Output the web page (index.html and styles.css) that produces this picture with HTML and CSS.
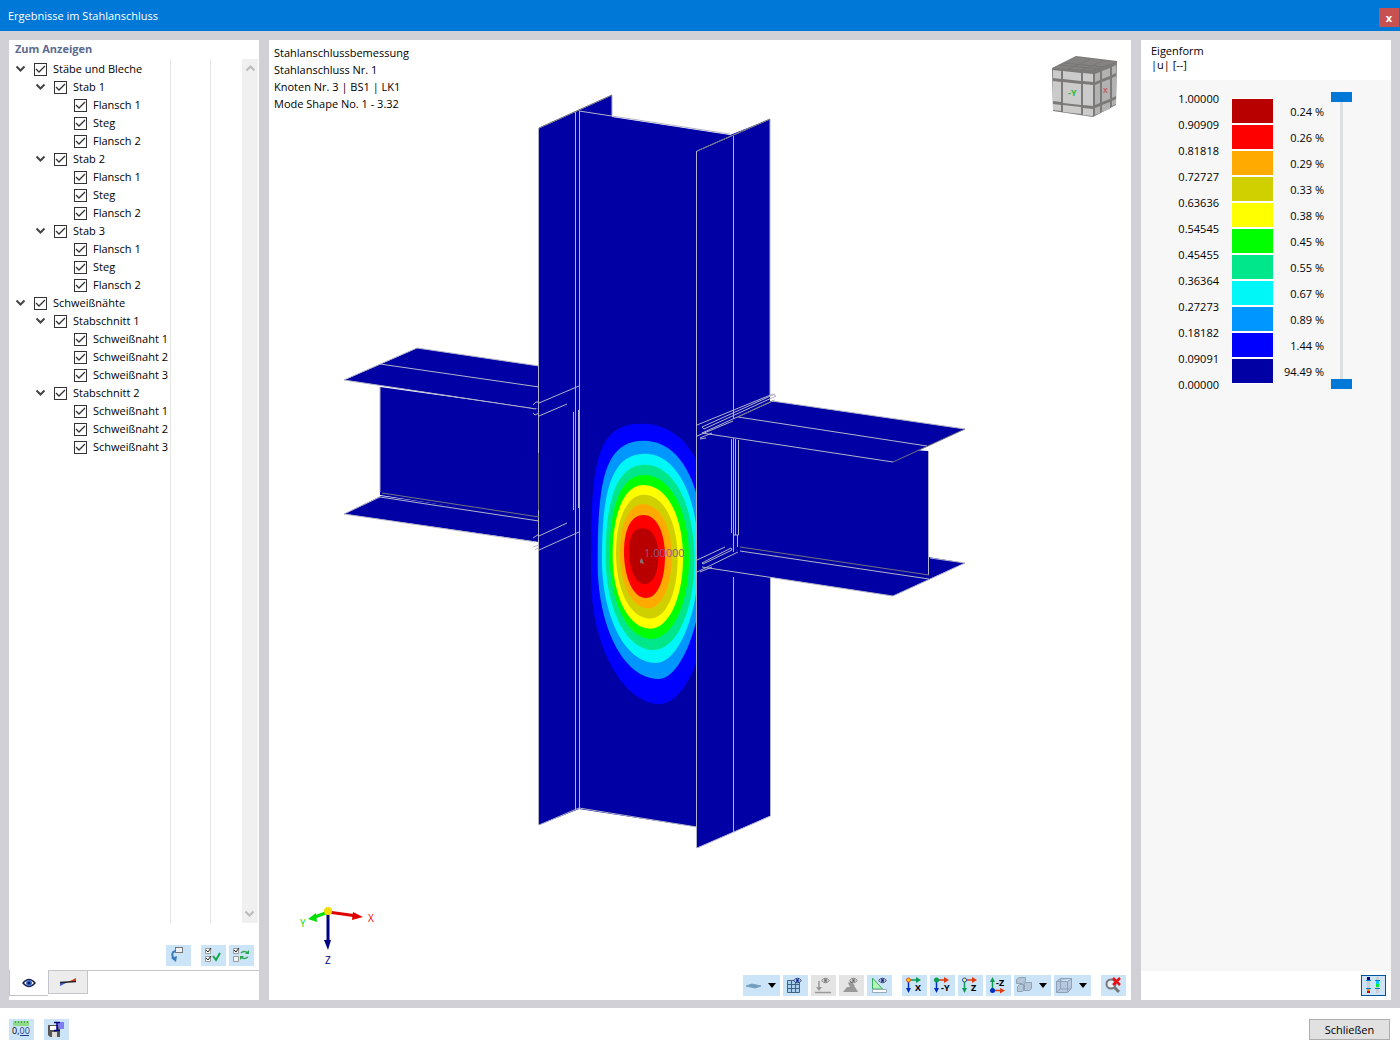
FILE: index.html
```html
<!DOCTYPE html>
<html lang="de">
<head>
<meta charset="utf-8">
<meta name="viewport" content="width=device-width, initial-scale=1">
<title>Ergebnisse im Stahlanschluss</title>
<link rel="stylesheet" href="styles.css">
</head>
<body>
<svg class="defs" aria-hidden="true">
  <symbol id="chev" viewBox="0 0 14 10"><path d="M2.500 2.500l4 4 4-4" fill="none" stroke="currentColor" stroke-width="2"/></symbol>
  <symbol id="eye" viewBox="0 0 14 10"><path d="M1 5Q7-2 13 5Q7 12 1 5z" fill="#fff" stroke="#1c2050" stroke-width="1.4"/><circle cx="7" cy="5" r="3" fill="#3d6fd0"/><circle cx="7" cy="5" r="1.5" fill="#101850"/></symbol>
  <symbol id="drop" viewBox="0 0 8 5"><path d="M0 0h8L4 5z" fill="#000"/></symbol>
</svg>

<header class="titlebar">
  <h1>Ergebnisse im Stahlanschluss</h1>
  <button class="close" aria-label="Fenster schließen">x</button>
</header>

<main class="workspace">
  <section class="panel side">
    <h2>Zum Anzeigen</h2>
    <div class="treebox">
      <ul class="tree">
        <li><div class="row"><button class="toggle" aria-label="Einklappen"><svg><use href="#chev"/></svg></button><label><input type="checkbox" checked>Stäbe und Bleche</label></div>
          <ul>
            <li><div class="row"><button class="toggle" aria-label="Einklappen"><svg><use href="#chev"/></svg></button><label><input type="checkbox" checked>Stab 1</label></div>
              <ul class="leaves">
                <li class="row"><label><input type="checkbox" checked>Flansch 1</label></li>
                <li class="row"><label><input type="checkbox" checked>Steg</label></li>
                <li class="row"><label><input type="checkbox" checked>Flansch 2</label></li>
              </ul>
            </li>
            <li><div class="row"><button class="toggle" aria-label="Einklappen"><svg><use href="#chev"/></svg></button><label><input type="checkbox" checked>Stab 2</label></div>
              <ul class="leaves">
                <li class="row"><label><input type="checkbox" checked>Flansch 1</label></li>
                <li class="row"><label><input type="checkbox" checked>Steg</label></li>
                <li class="row"><label><input type="checkbox" checked>Flansch 2</label></li>
              </ul>
            </li>
            <li><div class="row"><button class="toggle" aria-label="Einklappen"><svg><use href="#chev"/></svg></button><label><input type="checkbox" checked>Stab 3</label></div>
              <ul class="leaves">
                <li class="row"><label><input type="checkbox" checked>Flansch 1</label></li>
                <li class="row"><label><input type="checkbox" checked>Steg</label></li>
                <li class="row"><label><input type="checkbox" checked>Flansch 2</label></li>
              </ul>
            </li>
          </ul>
        </li>
        <li><div class="row"><button class="toggle" aria-label="Einklappen"><svg><use href="#chev"/></svg></button><label><input type="checkbox" checked>Schweißnähte</label></div>
          <ul>
            <li><div class="row"><button class="toggle" aria-label="Einklappen"><svg><use href="#chev"/></svg></button><label><input type="checkbox" checked>Stabschnitt 1</label></div>
              <ul class="leaves">
                <li class="row"><label><input type="checkbox" checked>Schweißnaht 1</label></li>
                <li class="row"><label><input type="checkbox" checked>Schweißnaht 2</label></li>
                <li class="row"><label><input type="checkbox" checked>Schweißnaht 3</label></li>
              </ul>
            </li>
            <li><div class="row"><button class="toggle" aria-label="Einklappen"><svg><use href="#chev"/></svg></button><label><input type="checkbox" checked>Stabschnitt 2</label></div>
              <ul class="leaves">
                <li class="row"><label><input type="checkbox" checked>Schweißnaht 1</label></li>
                <li class="row"><label><input type="checkbox" checked>Schweißnaht 2</label></li>
                <li class="row"><label><input type="checkbox" checked>Schweißnaht 3</label></li>
              </ul>
            </li>
          </ul>
        </li>
      </ul>
      <div class="column"></div>
      <div class="column wide"></div>
      <div class="scrollbar">
        <button aria-label="Nach oben"><svg class="up"><use href="#chev"/></svg></button>
        <button aria-label="Nach unten"><svg><use href="#chev"/></svg></button>
      </div>
    </div>
    <div class="actions">
      <button class="tool" aria-label="Auswahl übernehmen"><svg viewBox="0 0 25 21"><rect x="9.500" y="2.500" width="7" height="5" fill="#eef2f6" stroke="#777"/><path d="M9 6Q4 8 8 14" fill="none" stroke="#3a7cc0" stroke-width="2"/><path d="M5 13l6-2-1 6z" fill="#3a7cc0"/></svg></button>
      <span class="space"></span>
      <button class="tool" aria-label="Alle auswählen"><svg viewBox="0 0 25 21"><path d="M4.500 3.500h5v5h-5zM4.500 11.500h5v5h-5z" fill="#fff" stroke="#999"/><path d="M5 5l2 2 3-4M5 13l2 2 3-4" fill="none" stroke="#222"/><path d="M12 11l3 4 4-7" fill="none" stroke="#12a84b" stroke-width="2"/></svg></button>
      <button class="tool" aria-label="Auswahl umkehren"><svg viewBox="0 0 25 21"><path d="M4.500 3.500h5v5h-5zM4.500 11.500h5v5h-5z" fill="#eef4fa" stroke="#999"/><path d="M5 5l2 2 3-4" fill="none" stroke="#222"/><path d="M12 8q3-3 7 0M19 12q-4 3-7 0" fill="none" stroke="#2aa850" stroke-width="1.500"/><path d="M16 9h4V5zM15 11h-4v4z" fill="#2aa850"/></svg></button>
    </div>
    <nav class="tabs" aria-label="Ansichten">
      <button class="tab active" aria-label="Anzeige"><svg><use href="#eye"/></svg></button>
      <button class="tab" aria-label="Ergebnisse"><svg viewBox="0 0 18 10"><path d="M1 5h8L1 9z" fill="#3d5bd0"/><path d="M9 5l8-4v4z" fill="#e03a20"/><path d="M1 5.500L17 4.500" stroke="#222" stroke-width="1.500"/></svg></button>
      <span class="rest"></span>
    </nav>
  </section>

  <section class="panel view">
    <svg class="scene" viewBox="269 40 862 960" role="img" aria-label="Eigenform des Stahlanschlusses">
      <defs><clipPath id="web"><path d="M579 111H697V827H579z"/></clipPath></defs>
      <g class="steel">
        <path d="M344 380L417 348L539 366V409z"/>
        <path d="M380 387L539 409V520L380 495z"/>
        <path d="M344 514L381 496L539 518V542z"/>
        <path d="M539 128L612 95V117L730 135L770 119V816L697 848V827L579 809L539 825z"/>
      </g>
      <g clip-path="url(#web)"><g transform="translate(580 400) scale(.3333)">
        <path fill="#00f" d="M183 71C320 71 400 200 400 470C400 690 330 912 240 912C130 912 33 740 33 530C33 220 35 71 183 71"/>
        <path fill="#0096ff" d="M192 122C300 122 372 250 372 470C372 660 305 837 235 837C130 837 53 680 53 490C53 250 70 122 192 122"/>
        <path fill="#00f7f7" d="M196 161C285 161 356 280 356 480C356 640 295 789 228 789C130 789 66 640 66 480C66 280 90 161 196 161"/>
        <path fill="#00e68a" d="M194 194C280 194 343 310 343 480C343 630 290 750 220 750C135 750 77 620 77 470C77 300 110 194 194 194"/>
        <path fill="#0f0" d="M192 225C270 225 327 330 327 475C327 610 278 717 214 717C140 717 89 600 89 465C89 325 120 225 192 225"/>
        <path fill="#ff0" d="M190 255C260 255 309 345 309 475C309 595 265 686 212 686C145 686 98 590 98 465C98 345 130 255 190 255"/>
        <path fill="#d0d000" d="M192 284C250 284 293 365 293 475C293 580 258 656 210 656C150 656 108 570 108 460C108 360 140 284 192 284"/>
        <path fill="#fa0" d="M188 313C240 313 275 380 275 470C275 560 245 625 203 625C155 625 120 550 120 460C120 375 145 313 188 313"/>
        <path fill="red" d="M190 345C232 345 255 400 255 470C255 540 232 594 198 594C158 594 132 530 132 455C132 395 150 345 190 345"/>
        <path fill="#b90000" d="M188 385C218 385 235 420 235 468C235 515 220 552 194 552C166 552 147 505 147 452C147 410 162 385 188 385"/>
      </g></g>
      <g class="steel">
        <path d="M702 567L738 551L928 572V557L965 563L893 596z"/>
        <path d="M735 438L928 451L929 577L735 550z"/>
        <path d="M702 433L772 401L965 429L893 462z"/>
      </g>
      <g class="edges">
        <path d="M344 380L417 348L539 366M380 364L539 387M344 380L536 409M380 387V492M344 514L380 497L539 521M344 514L536 542"/>
        <path d="M538.500 128V825M539 128L612 95V116M575.500 112V809M579.500 111V809M579 111L730 134M696.500 151V848M697 151L770 119V396M733.500 136V419M770.500 578V816L697 848M733.500 577V832M539 825L579 808L697 827"/>
        <path d="M539 403L579 386M539 416L567 404M539 536L567 523M539 550L579 532M573.500 412V510M578.500 410V508"/>
        <path d="M533 405l3-3h3M533 413l2 2 4-2M533 538l6-4M533 547l6-2M535 550l4-3"/>
        <path d="M702 433L893 462M738 417L927 446M772 401L965 429M928.500 451V575M702 567L893 596L965 563L930 558M740 551L929 579M731.500 439V533M733.500 438V552M735.500 439V535M738.500 440V535H734M737.500 535V547"/>
        <path d="M697 425L773 394l3 2L704 429l-2-2L775 394M697 436l36-15M702 433L775 400M700 438l12-5M700 439l6-1M697 560L725 547M702 563L731 548l1 2L703 564zM697 572L738 552M700 572l12-5"/>
      </g>
      <path class="shade" d="M382 493L539 517M740 547L929 575M893 462L965 429M697 151L770 119M738 417L772 401M539 128L612 95M538.500 453V510"/>
      <path fill="#8a6a6a" d="M640 560l2-2 1 3 1 3-4-1z"/>
      <text class="peak" x="644" y="557">1.00000</text>
    </svg>

    <div class="view-top">
      <div class="info">
        <p>Stahlanschlussbemessung</p>
        <p>Stahlanschluss Nr. 1</p>
        <p>Knoten Nr. 3 | BS1 | LK1</p>
        <p>Mode Shape No. 1 - 3.32</p>
      </div>
      <svg class="cube" viewBox="0 0 70 66" role="img" aria-label="Ansichtswürfel">
        <path d="M2 14L26 2L67 7L66 51L43 63L3 57z" fill="#7c7a78"/>
        <path d="M4 14L26 3L64 8L43 16z" fill="#858381"/>
        <path d="M14 9L54 13M10 11L49 15M17 16L40 5M30 17L53 7" stroke="#787674" fill="none"/>
        <g fill="#cbcbcb"><path d="M3 16l8 1v8l-8-1zM13 17l18 2v8l-18-2zM33 19l10 1v8l-10-1zM3 27l8 1v20l-8-1zM13 28l18 2v21l-18-2zM33 30l10 1v21l-10-1zM3 50l8 1v6l-8-1zM13 51l18 2v7l-18-2zM33 54l10 1v7l-10-1z"/></g>
        <g fill="#b2b2b2"><path d="M45 20l5-2v8l-5 2zM52 17l8-3v8l-8 3zM62 13l4-2v8l-4 2zM45 31l5-2v20l-5 2zM52 28l8-3v20l-8 3zM62 24l4-2v20l-4 2zM45 54l5-2v7l-5 2zM52 51l8-3v7l-8 3zM62 47l4-2v5l-4 2z"/></g>
        <text class="cube-y" x="18" y="42">-Y</text><text class="cube-x" x="53" y="39">X</text>
      </svg>
    </div>

    <div class="view-bottom">
      <svg class="axes" viewBox="0 0 80 70" role="img" aria-label="Achsenkreuz">
        <path d="M29 14L58 18" stroke="#e00000" stroke-width="3"/><path d="M54 14l10 5-11 3z" fill="#e00000"/>
        <path d="M29 14L16 19" stroke="#00e000" stroke-width="3"/><path d="M17 15l-8 6 9 3z" fill="#00e000"/>
        <path d="M29 14V44" stroke="#000080" stroke-width="3"/><path d="M25 42h7l-3 10z" fill="#000080"/>
        <circle cx="29" cy="13" r="4" fill="#f0e000"/>
        <text x="69" y="24" fill="#e00">X</text><text x="1" y="29" fill="#0d0">Y</text><text x="26" y="66" fill="#000080">Z</text>
      </svg>
      <div class="toolbar">
        <button class="tool split" aria-label="Arbeitsebene"><svg viewBox="0 0 25 21"><path d="M3 11l6-2 9 2-6 2z" fill="#6f9cc0" stroke="#7ba0bd"/></svg><svg class="arrow"><use href="#drop"/></svg></button>
        <button class="tool" aria-label="Netz anzeigen"><svg viewBox="0 0 25 21"><path d="M4.500 5.500h12v12h-12zM8.500 5.500v12M12.500 5.500v12M4.500 9.500h12M4.500 13.500h12" fill="#a8d0ee" stroke="#3f6583"/><use href="#eye" x="10" y="2" width="9" height="7"/></svg></button>
        <button class="tool off" aria-label="Lasten anzeigen"><svg viewBox="0 0 25 21"><path d="M4 17.500h16M8 6v8" stroke="#999" stroke-width="1.500"/><path d="M5 12h6l-3 4z" fill="#999"/><use class="gray" href="#eye" x="10" y="2" width="9" height="7"/></svg></button>
        <button class="tool off" aria-label="Lager anzeigen"><svg viewBox="0 0 25 21"><path d="M4 17l4-5h8l3 5zM9 8l3-2 4 5-4 3z" fill="#999"/><use class="gray" href="#eye" x="10" y="2" width="9" height="7"/></svg></button>
        <button class="tool" aria-label="Maße anzeigen"><svg viewBox="0 0 25 21"><path d="M5.500 3v11h10z" fill="#b5f5b5" stroke="#38b060"/><path d="M5.500 14.500h14v3h-14z" fill="#fff" stroke="#9ab"/><use href="#eye" x="11" y="2" width="9" height="7"/></svg></button>
        <span class="space"></span>
        <button class="tool" aria-label="Ansicht in X"><svg viewBox="0 0 25 21"><path d="M7 5h9" stroke="#0a9a50" stroke-width="1.500"/><path d="M14 2l5 3-5 3z" fill="#0a9a50"/><path d="M6.500 5v9" stroke="#0030c0" stroke-width="1.500"/><path d="M4 13h5l-2.500 5z" fill="#0030c0"/><circle cx="6.500" cy="5" r="2" fill="#fd0" stroke="#e42"/><text x="13" y="16">X</text></svg></button>
        <button class="tool" aria-label="Ansicht in -Y"><svg viewBox="0 0 25 21"><path d="M7 5h9" stroke="#e03a10" stroke-width="1.500"/><path d="M14 2l5 3-5 3z" fill="#e03a10"/><path d="M6.500 5v9" stroke="#0030c0" stroke-width="1.500"/><path d="M4 13h5l-2.500 5z" fill="#0030c0"/><circle cx="6.500" cy="5" r="2.500" fill="#0a9a50"/><text x="11" y="16">-Y</text></svg></button>
        <button class="tool" aria-label="Ansicht in Z"><svg viewBox="0 0 25 21"><path d="M7 5h9" stroke="#e03a10" stroke-width="1.500"/><path d="M14 2l5 3-5 3z" fill="#e03a10"/><path d="M6.500 5v9" stroke="#0a9a50" stroke-width="1.500"/><path d="M4 13h5l-2.500 5z" fill="#0a9a50"/><circle cx="6.500" cy="5" r="2" fill="#ff8" stroke="#24a"/><text x="13" y="16">Z</text></svg></button>
        <button class="tool" aria-label="Ansicht in -Z"><svg viewBox="0 0 25 21"><path d="M7 15.500h9" stroke="#e03a10" stroke-width="1.500"/><path d="M14 13l5 2.500-5 3z" fill="#e03a10"/><path d="M6.500 15V6" stroke="#0a9a50" stroke-width="1.500"/><path d="M4 7h5L6.500 2z" fill="#0a9a50"/><circle cx="6.500" cy="15.500" r="2.500" fill="#0030c0"/><text x="10" y="11">-Z</text></svg></button>
        <button class="tool split" aria-label="Darstellung"><svg viewBox="0 0 25 21"><path d="M2.500 4.500l3-2h6v4l-3 2h-6zM3.500 11.500l2-2h5v5l-2 2h-5zM9.500 9.500l2-2h6v6l-2 2h-6z" fill="#b5c6d6" stroke="#8fa3b6"/></svg><svg class="arrow"><use href="#drop"/></svg></button>
        <button class="tool split" aria-label="Transparenz"><svg viewBox="0 0 25 21"><path d="M2.500 6.500l4-3h11v10l-4 4h-11zM2.500 6.500h11l4-3M13.500 6.500v11M6.500 4v10M3 17l3-3h11" fill="#b5c8df" stroke="#8fa1b8"/></svg><svg class="arrow"><use href="#drop"/></svg></button>
        <span class="space"></span>
        <button class="tool" aria-label="Zoom zurücksetzen"><svg viewBox="0 0 25 21"><circle cx="10" cy="9" r="4.500" fill="#e5eff7" stroke="#777" stroke-width="2"/><path d="M13 12l5 5" stroke="#777" stroke-width="3"/><path d="M12 3l7 7M19 3l-7 7" stroke="#e81010" stroke-width="2.500"/></svg></button>
      </div>
    </div>
  </section>

  <section class="panel legend">
    <div class="legend-head"><p>Eigenform</p><p>|u| [--]</p></div>
    <div class="legend-body">
      <ul class="values"><li>1.00000</li><li>0.90909</li><li>0.81818</li><li>0.72727</li><li>0.63636</li><li>0.54545</li><li>0.45455</li><li>0.36364</li><li>0.27273</li><li>0.18182</li><li>0.09091</li><li>0.00000</li></ul>
      <ul class="swatches"><li class="c1"></li><li class="c2"></li><li class="c3"></li><li class="c4"></li><li class="c5"></li><li class="c6"></li><li class="c7"></li><li class="c8"></li><li class="c9"></li><li class="c10"></li><li class="c11"></li></ul>
      <ul class="shares"><li>0.24 %</li><li>0.26 %</li><li>0.29 %</li><li>0.33 %</li><li>0.38 %</li><li>0.45 %</li><li>0.55 %</li><li>0.67 %</li><li>0.89 %</li><li>1.44 %</li><li>94.49 %</li></ul>
      <div class="slider">
        <input type="range" min="0" max="100" value="0" aria-label="Obere Grenze">
        <input type="range" min="0" max="100" value="100" aria-label="Untere Grenze">
      </div>
    </div>
    <div class="legend-foot">
      <button class="tool selected" aria-label="Farbskala"><svg viewBox="1 1 23 19"><path d="M7.500 2v16M16.500 2v16" stroke="#ccc" stroke-width="3"/><path d="M7.500 2v3" stroke="#008" stroke-width="3"/><path d="M7.500 14v2" stroke="#f80" stroke-width="3"/><path d="M7.500 16v2" stroke="#c00" stroke-width="3"/><path d="M16.500 6v3" stroke="#0cf" stroke-width="3"/><path d="M16.500 9v3" stroke="#0e3" stroke-width="3"/><path d="M5 5.500h5M5 13.500h5M14 5.500h5M14 13.500h5" stroke="#0078d7"/></svg></button>
    </div>
  </section>
</main>

<footer class="bottombar">
  <button class="tool" aria-label="Einheiten und Dezimalstellen"><svg viewBox="0 0 25 21"><path d="M4 2h16v5H4z" fill="#8edb88"/><path d="M6.500 2v2M9.500 2v2M12.500 2v2M15.500 2v2M18.500 2v2" stroke="#4aa050"/><text class="num" x="3" y="15">0,<tspan fill="#1c3c90">00</tspan></text><path d="M11 16.500h9" stroke="#1c3c90"/></svg></button>
  <button class="tool" aria-label="Anschluss speichern"><svg viewBox="0 0 25 21"><path d="M4 6h12v12H6l-2-2z" fill="#555"/><path d="M6 7h7v4H6z" fill="#fff"/><path d="M8 13h5v5H8z" fill="#ddd"/><path d="M13 3h7v7h-5z" fill="#7d7df0"/><path d="M10 3.500h6M10 11.500h6M13 3v9" stroke="#000080" stroke-width="1.500"/></svg></button>
  <button class="primary">Schließen</button>
</footer>
</body>
</html>
```
FILE: styles.css
```css
* { box-sizing: border-box; }
body {
  margin: 0;
  min-height: 100vh;
  display: flex;
  flex-direction: column;
  background: #fff;
  color: #000;
  font: 11px/16px "Open Sans", "Noto Sans", sans-serif;
}
h1, h2, p, ul { margin: 0; padding: 0; }
ul { list-style: none; }
button { margin: 0; padding: 0; border: 0; background: none; font: inherit; color: inherit; }
svg { display: block; }
.defs { width: 0; height: 0; position: absolute; }

.titlebar {
  height: 31px;
  padding: 0 1px 0 8px;
  display: flex;
  align-items: center;
  justify-content: space-between;
  background: #0078d7;
  color: #fff;
}
h1 { font-size: 11px; font-weight: 400; }
.close {
  width: 20px;
  height: 19px;
  align-self: flex-end;
  margin-bottom: 4px;
  background: #c75050;
  line-height: 16px;
  font-weight: 700;
}

.workspace {
  flex: 1;
  display: grid;
  grid-template-columns: 250px minmax(0, 1fr) 250px;
  gap: 10px;
  padding: 9px 9px 8px;
  background: #d0d0d6;
}
.panel { display: flex; flex-direction: column; background: #fff; }

h2 { height: 19px; padding-left: 6px; font-size: 11px; line-height: 18px; color: #5b6b8f; }
.treebox { flex: 1; display: flex; padding-right: 1px; }
.tree { width: 161px; padding-top: 1px; white-space: nowrap; }
.tree ul { padding-left: 20px; }
.row { height: 18px; padding-left: 5px; display: flex; align-items: center; gap: 6px; }
.tree .leaves { padding-left: 40px; }
.row label { display: flex; align-items: center; gap: 6px; }
.toggle { width: 14px; height: 10px; color: #444; }
.toggle svg { width: 14px; height: 10px; }
.row input {
  appearance: none;
  width: 13px;
  height: 13px;
  margin: 0;
  border: 1px solid #333;
  background: #fff url("data:image/svg+xml,%3Csvg xmlns='http://www.w3.org/2000/svg' viewBox='0 0 11 11'%3E%3Cpath d='M1 5l3 3 6-6' fill='none' stroke='%23333' stroke-width='1.3'/%3E%3C/svg%3E");
}
.column { width: 40px; border-left: 1px solid #e5e5e5; }
.column.wide { flex: 1; }
.scrollbar { width: 16px; padding: 3px 1px; display: flex; flex-direction: column; justify-content: space-between; background: #f0f0f0; color: #bbb; }
.scrollbar svg { width: 14px; height: 12px; }
.up { transform: rotate(180deg); }

.actions { display: flex; justify-content: flex-end; gap: 3px; padding: 22px 5px 4px; }
.tool { width: 25px; height: 21px; background: #cce4f7; display: flex; align-items: center; }
.tool > svg { width: 25px; height: 21px; flex: none; }
.tool text { font: 700 9px "Open Sans", sans-serif; }
.tool text.num { font-weight: 400; font-size: 9px; }
.tool.split { width: 37px; }
.tool > .arrow { width: 8px; height: 5px; }
.tool.off { background: #e4e4e4; }
.gray { filter: grayscale(1); opacity: .6; }
.space { width: 4px; }

.tabs { height: 30px; display: flex; }
.tab { width: 40px; height: 24px; display: grid; place-items: center; background: #ececec; border: 1px solid #c4c4cc; }
.tab.active { background: #fff; width: 39px; height: 26px; border-width: 0 0 1px 1px; }
.tab svg { width: 18px; height: 10px; }
.rest { flex: 1; border-top: 1px solid #c4c4cc; }

.view { position: relative; justify-content: space-between; }
.scene { position: absolute; inset: 0; width: 100%; height: 100%; }
.steel { fill: #0000a5; }
.edges { fill: none; stroke: #b4b4c8; }
.shade { fill: none; stroke: #73737d; }
.peak { font: 11px "Open Sans", sans-serif; fill: #8a5a8a; }
.view-top, .view-bottom { position: relative; display: flex; justify-content: space-between; }
.view-top { padding: 4px 11px 0 5px; }
.info { line-height: 17px; }
.cube { width: 70px; height: 66px; margin-top: 10px; }
.cube text { font: 700 9px "Open Sans", sans-serif; }
.cube .cube-y { fill: #2fb832; }
.cube .cube-x { fill: #c06050; font-size: 7px; }
.view-bottom { align-items: flex-end; padding: 0 5px 4px 30px; }
.axes { width: 80px; height: 70px; margin-bottom: 28px; font-size: 10px; }
.toolbar { display: flex; gap: 3px; }

.legend-head { height: 40px; padding: 4px 10px; line-height: 14px; }
.legend-body { flex: 1; display: flex; align-items: flex-start; padding: 6px 39px 0 0; background: #f7f7f7; line-height: 26px; }
.values { width: 78px; text-align: right; }
.swatches { width: 41px; margin: 12px 0 0 13px; }
.swatches li { height: 26px; border: solid #fff; border-width: 1px 0; }
.shares { width: 51px; margin-top: 13px; text-align: right; }
.slider { margin: 6px 0 0 7px; display: grid; background: linear-gradient(#dde0e0, #dde0e0) 50% 0 / 3px 100% no-repeat; }
.slider input {
  grid-area: 1 / 1;
  appearance: none;
  writing-mode: vertical-lr;
  width: 21px;
  height: 297px;
  margin: 0;
  background: none;
  pointer-events: none;
}
.slider input::-webkit-slider-thumb { appearance: none; width: 21px; height: 10px; background: #0078d7; pointer-events: auto; }
.c1 { background: #b90000; }
.c2 { background: #f00; }
.c3 { background: #fa0; }
.c4 { background: #d0d000; }
.c5 { background: #ff0; }
.c6 { background: #0f0; }
.c7 { background: #00e68a; }
.c8 { background: #00f7f7; }
.c9 { background: #0096ff; }
.c10 { background: #00f; }
.c11 { background: #0000a5; }
.legend-foot { height: 29px; padding: 4px 5px; display: flex; justify-content: flex-end; }
.selected { border: 1px solid #005499; }
.selected > svg { width: 23px; height: 19px; }

.bottombar { height: 42px; padding: 0 10px 0 9px; display: flex; align-items: center; gap: 10px; }
.primary { width: 81px; height: 21px; margin-left: auto; background: #e1e1e1; border: 1px solid #adadad; line-height: 19px; }
```
